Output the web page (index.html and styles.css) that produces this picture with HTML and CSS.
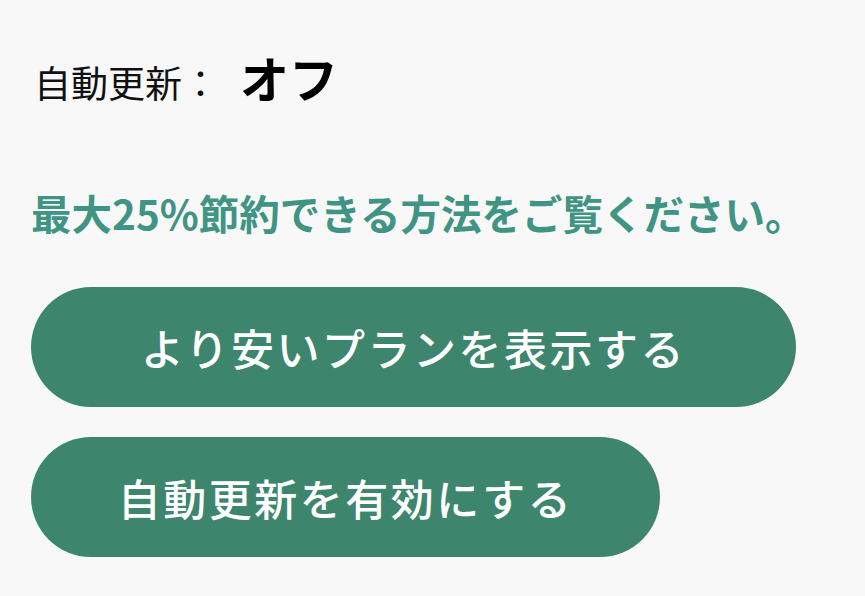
FILE: index.html
```html
<!DOCTYPE html>
<html lang="ja">
<head>
<meta charset="utf-8">
<link rel="stylesheet" href="styles.css">
</head>
<body>
<main class="panel">
  <div class="status">
    <span class="status-label">自動更新：</span><span class="status-value">オフ</span>
  </div>
  <p class="promo">最大25%節約できる方法をご覧ください。</p>
  <div class="actions">
    <button class="btn btn-wide">より安いプランを表示する</button>
    <button class="btn btn-narrow">自動更新を有効にする</button>
  </div>
</main>
</body>
</html>
```
FILE: styles.css
```css
html, body {
  margin: 0;
  padding: 0;
  background: #f7f8f7;
}
body {
  font-family: "Noto Sans CJK JP", "Noto Sans", sans-serif;
  width: 865px;
  height: 596px;
  overflow: hidden;
}
.panel {
  padding: 45px 0 0 31px;
  display: flex;
  flex-direction: column;
}
.status {
  display: flex;
  align-items: baseline;
  height: 64px;
  padding-left: 3px;
}
.status-label {
  font-size: 37px;
  font-weight: 400;
  color: #111;
  line-height: 64px;
}
.status-value {
  font-size: 49px;
  font-weight: 700;
  color: #000;
  margin-left: 21px;
  line-height: 64px;
}
.promo {
  margin: 78px 0 0 0;
  font-size: 40.5px;
  font-weight: 700;
  color: #3f9483;
  line-height: 52px;
  letter-spacing: 0;
}
.actions {
  display: flex;
  flex-direction: column;
  align-items: flex-start;
  gap: 30px;
  margin-top: 48px;
}
.btn {
  height: 120px;
  border: none;
  border-radius: 60px;
  background: #3d856d;
  color: #fff;
  font-family: "Noto Sans CJK JP", "Noto Sans", sans-serif;
  font-size: 43px;
  font-weight: 500;
  letter-spacing: 2.5px;
  display: flex;
  align-items: center;
  justify-content: center;
  padding: 0;
}
.btn-wide {
  width: 765px;
}
.btn-narrow {
  width: 629px;
}
```
